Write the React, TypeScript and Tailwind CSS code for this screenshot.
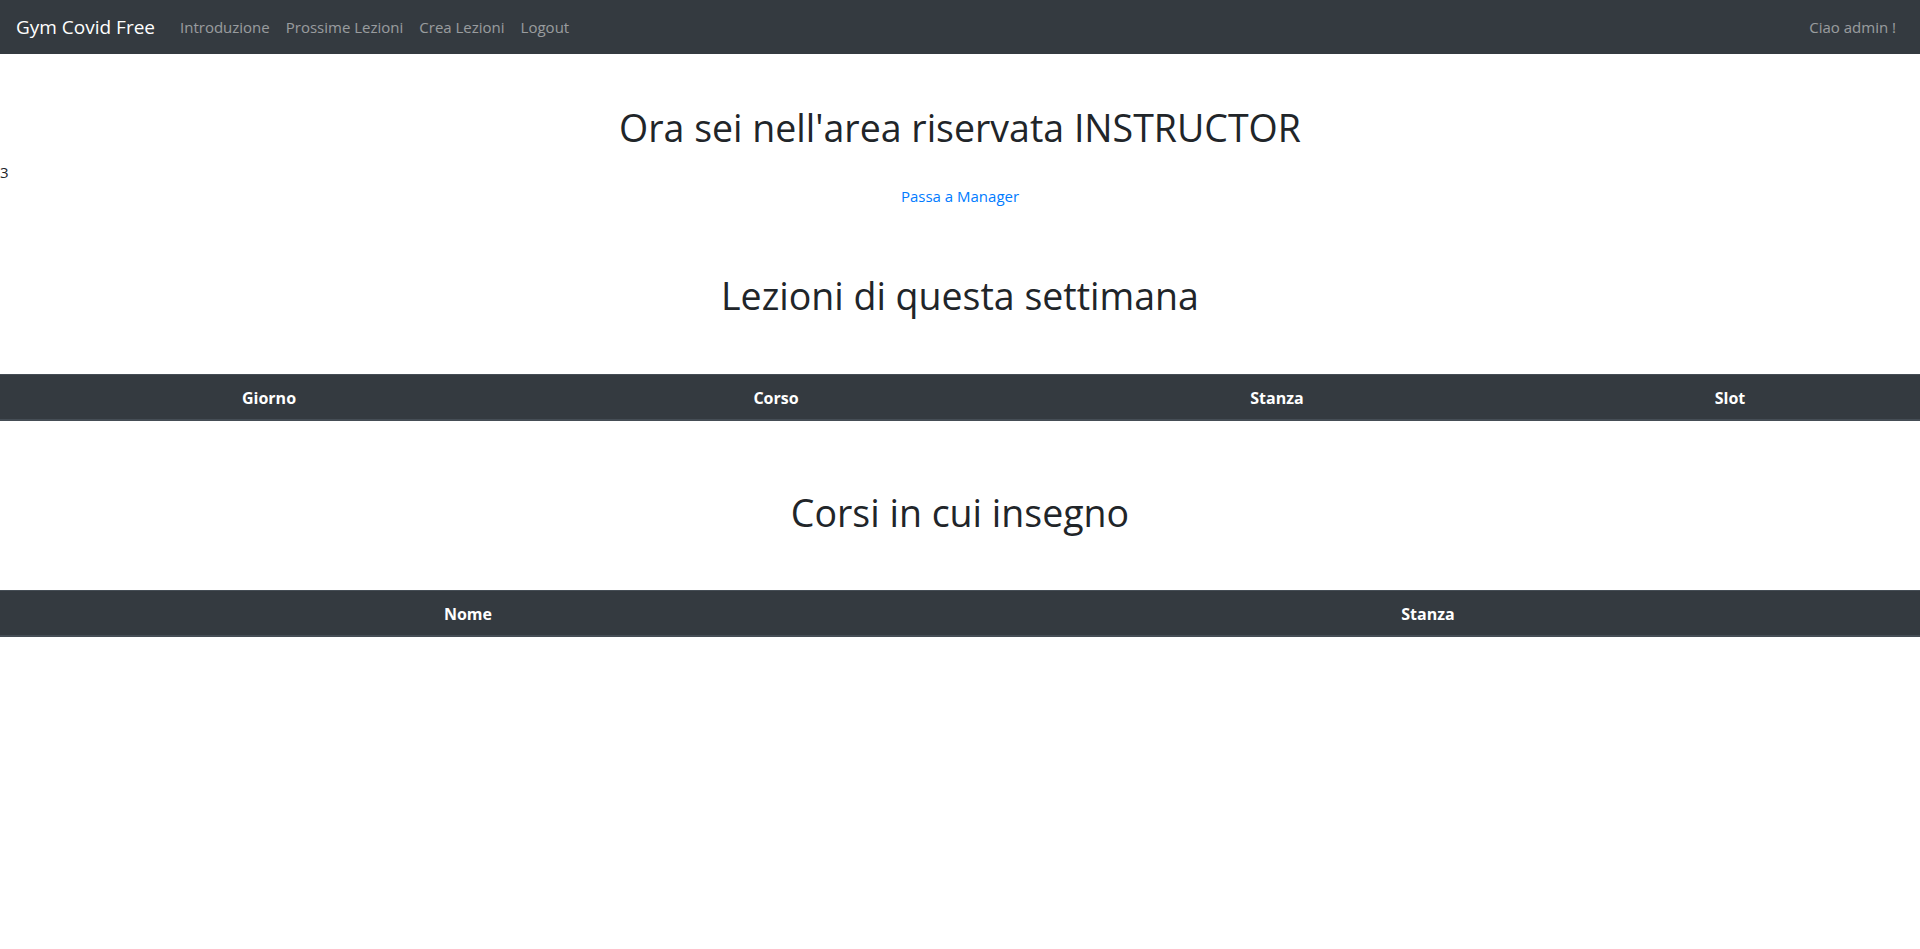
const weekCols = [
  { label: "Giorno", w: "w-[538px]" },
  { label: "Corso", w: "w-[476px]" },
  { label: "Stanza", w: "w-[526px]" },
  { label: "Slot", w: "flex-1" },
];

const courseCols = [
  { label: "Nome", w: "w-[936px]" },
  { label: "Stanza", w: "flex-1" },
];

function HeadRow({ cols }: { cols: { label: string; w: string }[] }) {
  return (
    <div className="flex h-[47px] w-full border-t border-b-2 border-[#454d55] bg-[#343a40] pt-px">
      {cols.map((c) => (
        <div key={c.label} className={`${c.w} flex items-center justify-center text-[16px] font-bold text-white`}>
          {c.label}
        </div>
      ))}
    </div>
  );
}

export default function App() {
  return (
    <div className="min-h-[949px] bg-white text-[#212529]" style={{ fontFamily: "'Open Sans', 'Noto Sans', sans-serif" }}>
      <nav className="flex h-[54px] items-center bg-[#343a40] px-4">
        <span className="mr-[17px] text-[19px] text-white">Gym Covid Free</span>
        <ul className="flex flex-1 items-center">
          {["Introduzione", "Prossime Lezioni", "Crea Lezioni", "Logout"].map((l) => (
            <li key={l} className="px-2 text-[15px] text-white/50">
              {l}
            </li>
          ))}
        </ul>
        <span className="px-2 text-[15px] text-white/50">Ciao admin !</span>
      </nav>

      <h1 className="mt-[50px] mb-2 text-center text-[37.5px] leading-[48px]">Ora sei nell'area riservata INSTRUCTOR</h1>
      <div className="text-[15px] leading-6">3</div>
      <div className="text-center text-[15px] leading-6">
        <a className="text-[#007bff]">Passa a Manager</a>
      </div>

      <h2 className="mt-[64px] mb-[54px] text-center text-[37.5px] leading-[48px]">Lezioni di questa settimana</h2>
      <HeadRow cols={weekCols} />

      <h2 className="mt-[68px] mb-[53px] text-center text-[37.5px] leading-[48px]">Corsi in cui insegno</h2>
      <HeadRow cols={courseCols} />
    </div>
  );
}
